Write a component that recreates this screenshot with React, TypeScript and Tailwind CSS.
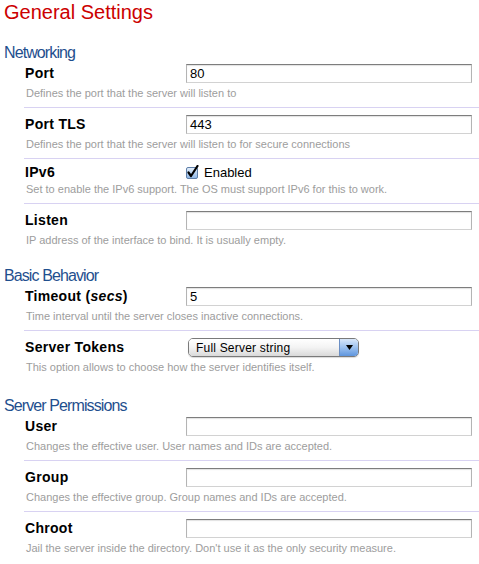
import type { ReactNode } from 'react';

type Field = {
  label: ReactNode;
  help: string;
  kind: 'text' | 'check' | 'select';
  value?: string;
};

const SECTIONS: { title: string; mt: string; fields: Field[] }[] = [
  {
    title: 'Networking',
    mt: 'mt-[19px]',
    fields: [
      { label: 'Port', help: 'Defines the port that the server will listen to', kind: 'text', value: '80' },
      { label: 'Port TLS', help: 'Defines the port that the server will listen to for secure connections', kind: 'text', value: '443' },
      { label: 'IPv6', help: 'Set to enable the IPv6 support. The OS must support IPv6 for this to work.', kind: 'check' },
      { label: 'Listen', help: 'IP address of the interface to bind. It is usually empty.', kind: 'text', value: '' },
    ],
  },
  {
    title: 'Basic Behavior',
    mt: 'mt-[12px]',
    fields: [
      {
        label: (
          <>
            Timeout (<i>secs</i>)
          </>
        ),
        help: 'Time interval until the server closes inactive connections.',
        kind: 'text',
        value: '5',
      },
      { label: 'Server Tokens', help: 'This option allows to choose how the server identifies itself.', kind: 'select', value: 'Full Server string' },
    ],
  },
  {
    title: 'Server Permissions',
    mt: 'mt-[15px]',
    fields: [
      { label: 'User', help: 'Changes the effective user. User names and IDs are accepted.', kind: 'text', value: '' },
      { label: 'Group', help: 'Changes the effective group. Group names and IDs are accepted.', kind: 'text', value: '' },
      { label: 'Chroot', help: "Jail the server inside the directory. Don't use it as the only security measure.", kind: 'text', value: '' },
    ],
  },
];

function TextInput({ value }: { value: string }) {
  return (
    <div className="h-[19px] w-[286px] border border-t-[#7d7d7d] border-x-[#b4b4b4] border-b-[#d2d2d2] bg-white pl-[3px] text-[13px] leading-[17px] text-black shadow-[inset_0_1px_1px_rgba(0,0,0,0.12)]">
      {value}
    </div>
  );
}

function CheckBox() {
  return (
    <div className="flex items-center gap-[4px]">
      <svg width="14" height="14" viewBox="0 0 14 14" className="-mt-[1px]">
        <defs>
          <linearGradient id="cb" x1="0" y1="0" x2="0" y2="1">
            <stop offset="0" stopColor="#e6f0fb" />
            <stop offset="1" stopColor="#8db6e6" />
          </linearGradient>
        </defs>
        <rect x="0.5" y="2.5" width="11" height="11" rx="1.5" fill="url(#cb)" stroke="#5f7fa8" />
        <path d="M2.5 7.5 L5 11 L11.5 1" fill="none" stroke="#000" strokeWidth="2.2" strokeLinecap="round" strokeLinejoin="round" />
      </svg>
      <span className="text-[13px] leading-[13px] text-black">Enabled</span>
    </div>
  );
}

function Select({ value }: { value: string }) {
  return (
    <div className="ml-[2px] flex h-[19px] w-[171px] overflow-hidden rounded-[5px] border border-[#7a7a7a] shadow-[0_1px_1px_rgba(0,0,0,0.15)]">
      <div className="flex flex-1 items-center bg-gradient-to-b from-white via-[#f3f3f3] to-[#d9d9d9] pl-[7px] text-[12px] tracking-[0.2px] text-black">
        {value}
      </div>
      <div className="flex w-[19px] items-center justify-center border-l border-[#6b8fc4] bg-gradient-to-b from-[#d9e7f9] via-[#9cc1ef] to-[#5e95dd]">
        <svg width="7" height="5" viewBox="0 0 7 5">
          <path d="M0 0 H7 L3.5 5 Z" fill="#000" />
        </svg>
      </div>
    </div>
  );
}

function Row({ field, first, last }: { field: Field; first: boolean; last: boolean }) {
  return (
    <div className={`${first ? 'pt-[1px]' : 'pt-[7px]'} pb-[7px] ${last ? '' : 'border-b border-[#d8d2f2]'}`}>
      <div className={`flex items-center ${field.kind === 'check' ? 'h-[13px]' : 'h-[19px]'}`}>
        <div className="w-[162px] pl-[1px] text-[14px] font-bold tracking-[0.3px] text-black">{field.label}</div>
        {field.kind === 'text' && <TextInput value={field.value ?? ''} />}
        {field.kind === 'check' && <CheckBox />}
        {field.kind === 'select' && <Select value={field.value ?? ''} />}
      </div>
      <p className="mt-[3px] pl-[2px] text-[11px] leading-[14px] text-[#9d9d9d]">{field.help}</p>
    </div>
  );
}

export default function App() {
  return (
    <div className="min-h-[564px] w-[479px] bg-white pl-[4px] font-['Liberation_Sans',Arial,sans-serif]">
      <h1 className="text-[20px] leading-[24px] text-[#cc0000]">General Settings</h1>
      {SECTIONS.map((s) => (
        <section key={s.title} className={s.mt}>
          <h2 className="text-[16px] leading-[20px] tracking-[-0.9px] text-[#1f4f8e]">{s.title}</h2>
          <div className="ml-[20px]">
            {s.fields.map((f, i) => (
              <Row key={i} field={f} first={i === 0} last={i === s.fields.length - 1} />
            ))}
          </div>
        </section>
      ))}
    </div>
  );
}
